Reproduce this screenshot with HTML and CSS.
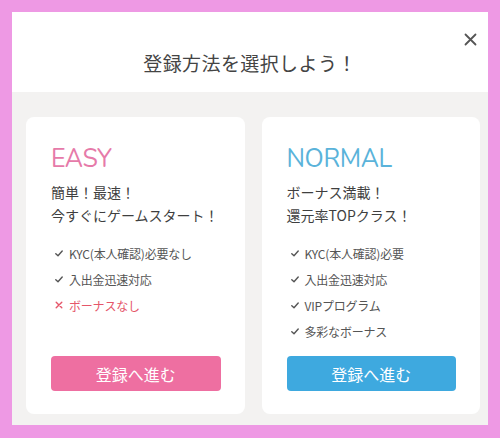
FILE: index.html
```html
<!DOCTYPE html>
<html lang="ja">
<head>
<meta charset="utf-8">
<link rel="stylesheet" href="styles.css">
</head>
<body>
<div class="frame">
  <div class="modal">
    <div class="header">
      <h1 class="title">登録方法を選択しよう！</h1>
      <button class="close" aria-label="close">
        <svg width="13" height="13" viewBox="0 0 13 13"><path d="M1.5 1.5 L11.5 11.5 M11.5 1.5 L1.5 11.5" stroke="#555" stroke-width="1.8" stroke-linecap="round"/></svg>
      </button>
    </div>
    <div class="body">
      <div class="card">
        <div class="plan plan-easy">EASY</div>
        <p class="lead">簡単！最速！<br>今すぐにゲームスタート！</p>
        <ul class="list">
          <li><svg class="ic" width="8" height="7" viewBox="0 0 8 7"><path d="M0.8 3.8 L3 5.8 L7.2 1" fill="none" stroke="#555" stroke-width="1.4" stroke-linecap="round" stroke-linejoin="round"/></svg>KYC(本人確認)必要なし</li>
          <li><svg class="ic" width="8" height="7" viewBox="0 0 8 7"><path d="M0.8 3.8 L3 5.8 L7.2 1" fill="none" stroke="#555" stroke-width="1.4" stroke-linecap="round" stroke-linejoin="round"/></svg>入出金迅速対応</li>
          <li class="neg"><svg class="ic" width="8" height="8" viewBox="0 0 8 8"><path d="M1.2 1.2 L6.8 6.8 M6.8 1.2 L1.2 6.8" fill="none" stroke="#e5566a" stroke-width="1.4" stroke-linecap="round"/></svg>ボーナスなし</li>
        </ul>
        <button class="btn btn-pink">登録へ進む</button>
      </div>
      <div class="card">
        <div class="plan plan-normal">NORMAL</div>
        <p class="lead">ボーナス満載！<br>還元率TOPクラス！</p>
        <ul class="list">
          <li><svg class="ic" width="8" height="7" viewBox="0 0 8 7"><path d="M0.8 3.8 L3 5.8 L7.2 1" fill="none" stroke="#555" stroke-width="1.4" stroke-linecap="round" stroke-linejoin="round"/></svg>KYC(本人確認)必要</li>
          <li><svg class="ic" width="8" height="7" viewBox="0 0 8 7"><path d="M0.8 3.8 L3 5.8 L7.2 1" fill="none" stroke="#555" stroke-width="1.4" stroke-linecap="round" stroke-linejoin="round"/></svg>入出金迅速対応</li>
          <li><svg class="ic" width="8" height="7" viewBox="0 0 8 7"><path d="M0.8 3.8 L3 5.8 L7.2 1" fill="none" stroke="#555" stroke-width="1.4" stroke-linecap="round" stroke-linejoin="round"/></svg>VIPプログラム</li>
          <li><svg class="ic" width="8" height="7" viewBox="0 0 8 7"><path d="M0.8 3.8 L3 5.8 L7.2 1" fill="none" stroke="#555" stroke-width="1.4" stroke-linecap="round" stroke-linejoin="round"/></svg>多彩なボーナス</li>
        </ul>
        <button class="btn btn-blue">登録へ進む</button>
      </div>
    </div>
  </div>
</div>
</body>
</html>
```
FILE: styles.css
```css
* { box-sizing: border-box; }
html, body { margin: 0; padding: 0; }
body {
  width: 500px;
  height: 438px;
  background: #ee99e4;
  font-family: "Noto Sans CJK JP", "Noto Sans", sans-serif;
  overflow: hidden;
}
.frame {
  padding: 12px 12px 13px 12px;
  height: 438px;
}
.modal {
  position: relative;
  height: 413px;
  display: flex;
  flex-direction: column;
  background: #f3f2f1;
}
.header {
  background: #fff;
  height: 80px;
  padding-top: 39px;
}
.title {
  margin: 0;
  text-align: center;
  font-size: 19px;
  line-height: 24px;
  font-weight: 400;
  color: #444;
  letter-spacing: 0.4px;
}
.close {
  position: absolute;
  top: 20px;
  right: 10px;
  width: 15px;
  height: 15px;
  padding: 0;
  border: 0;
  background: transparent;
  display: flex;
  align-items: center;
  justify-content: center;
}
.body {
  flex: 1;
  display: flex;
  gap: 17px;
  padding: 25px 8px 11px 14px;
}
.card {
  flex: 1;
  background: #fff;
  border-radius: 8px;
  padding: 26px 24px 23px 25px;
  display: flex;
  flex-direction: column;
}
.plan {
  font-family: "Nunito", "Lato", sans-serif;
  font-size: 25px;
  line-height: 32px;
  font-weight: 400;
  letter-spacing: -0.4px;
}
.plan-easy { color: #e67aa9; }
.plan-normal { color: #5ab3da; }
.lead {
  margin: 6px 0 0 0;
  font-size: 14px;
  line-height: 23px;
  font-weight: 400;
  color: #3f3f3f;
}
.list {
  list-style: none;
  margin: 13px 0 0 0;
  padding: 0 0 0 4px;
}
.list li {
  display: flex;
  align-items: center;
  height: 26px;
  font-size: 12px;
  color: #555;
  letter-spacing: -0.2px;
}
.list li.neg { color: #e5566a; }
.ic { margin-right: 6px; flex: none; }
.btn {
  margin-top: auto;
  height: 35px;
  width: 100%;
  border: 0;
  border-radius: 4px;
  color: #fff;
  font-family: "Noto Sans CJK JP", sans-serif;
  font-size: 16px;
  font-weight: 400;
}
.btn-pink { background: #ee6fa1; }
.btn-blue { background: #3ea9df; }
```
